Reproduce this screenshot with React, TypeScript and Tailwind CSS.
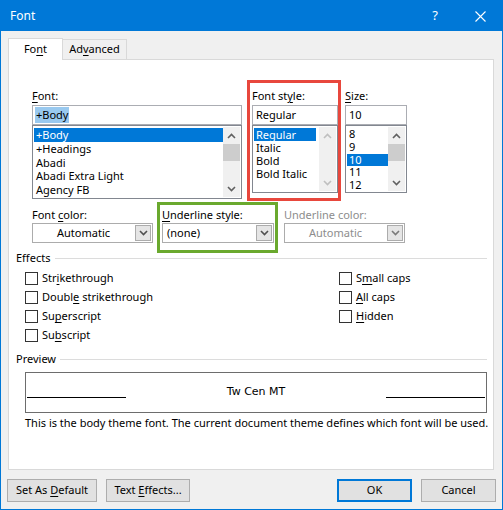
import React from "react";

const ui = { fontFamily: '"Noto Sans", "Open Sans", Arial, sans-serif' };

// label with an underlined access key
function Key({ text, k, className = "" }: { text: string; k?: number; className?: string }) {
  if (k === undefined) return <span className={className}>{text}</span>;
  return (
    <span className={className}>
      {text.slice(0, k)}
      <span className="underline underline-offset-2">{text[k]}</span>
      {text.slice(k + 1)}
    </span>
  );
}

function Chevron({ up = false, color = "#606060" }: { up?: boolean; color?: string }) {
  return (
    <svg width="9" height="6" viewBox="0 0 9 6">
      <polyline
        points={up ? "1,5 4.5,1.5 8,5" : "1,1 4.5,4.5 8,1"}
        fill="none"
        stroke={color}
        strokeWidth="1.6"
      />
    </svg>
  );
}

function Scrollbar({ thumb = true, disabled = false }: { thumb?: boolean; disabled?: boolean }) {
  const c = disabled ? "#bfbfbf" : "#606060";
  return (
    <div className="flex w-[17px] shrink-0 flex-col bg-[#f0f0f0]">
      <div className="flex h-[17px] items-center justify-center">
        <Chevron up color={c} />
      </div>
      <div className="flex-1">{thumb && <div className="h-[17px] bg-[#cdcdcd]" />}</div>
      <div className="flex h-[17px] items-center justify-center">
        <Chevron color={c} />
      </div>
    </div>
  );
}

function ListBox({
  items,
  selected,
  rowH,
  height,
  disabledBar = false,
}: {
  items: string[];
  selected: number;
  rowH: string;
  height: string;
  disabledBar?: boolean;
}) {
  return (
    <div className={`flex ${height} border border-[#828790] bg-white p-px`}>
      <div className="flex-1 overflow-hidden pt-px">
        {items.map((it, i) => (
          <div
            key={it}
            className={`${rowH} pl-[2px] ${
              i === selected ? "bg-[#0078d7] text-white" : "text-black"
            }`}
          >
            {it}
          </div>
        ))}
      </div>
      <Scrollbar disabled={disabledBar} thumb={!disabledBar} />
    </div>
  );
}

function TextBox({ value, highlight = false }: { value: string; highlight?: boolean }) {
  return (
    <div className="flex h-[20px] items-center border border-[#abadb3] bg-white px-[2px]">
      <span className={highlight ? "bg-[#99c9ef] px-px" : "px-px"}>{value}</span>
    </div>
  );
}

function Dropdown({
  value,
  center = true,
  disabled = false,
}: {
  value: string;
  center?: boolean;
  disabled?: boolean;
}) {
  return (
    <div className="flex h-[20px] border border-[#acacac] bg-white">
      <div
        className={`flex flex-1 items-center ${center ? "justify-center" : "pl-[4px]"} ${
          disabled ? "text-[#8d8d8d]" : "text-black"
        }`}
      >
        {value}
      </div>
      <div className="m-px flex w-[16px] items-center justify-center border border-[#acacac] bg-[#e5e5e5]">
        <Chevron color={disabled ? "#7a7a7a" : "#505050"} />
      </div>
    </div>
  );
}

function Check({ label, k }: { label: string; k: number }) {
  return (
    <div className="flex h-[19px] items-center gap-[4px]">
      <div className="h-[13px] w-[13px] border border-[#333333] bg-white" />
      <Key text={label} k={k} />
    </div>
  );
}

function GroupTitle({ title, line }: { title: string; line: string }) {
  return (
    <div className="flex h-[16px] items-center">
      <span>{title}</span>
      <div className={`ml-auto h-px ${line} bg-[#dcdcdc]`} />
    </div>
  );
}

function Button({ label, k, w, primary = false }: { label: string; k?: number; w: string; primary?: boolean }) {
  return (
    <div
      className={`flex h-[23px] ${w} items-center justify-center bg-[#e1e1e1] ${
        primary ? "border-2 border-[#0078d7]" : "border border-[#adadad]"
      }`}
    >
      <Key text={label} k={k} />
    </div>
  );
}

export default function App() {
  return (
    <div
      style={ui}
      className="flex h-[510px] w-[503px] flex-col border border-[#0078d7] bg-[#f0f0f0] text-[11px] text-black"
    >
      {/* title bar */}
      <div className="flex h-[30px] items-center bg-[#0078d7] pl-[9px] text-white">
        <span className="text-[12px]">Font</span>
        <span className="ml-auto mr-[37px] text-[13px]">?</span>
        <svg width="11" height="11" viewBox="0 0 11 11" className="mr-[16px]">
          <path d="M0.5 0.5 L10.5 10.5 M10.5 0.5 L0.5 10.5" stroke="white" strokeWidth="1.1" />
        </svg>
      </div>

      {/* tabs */}
      <div className="ml-[7px] mt-[7px] flex items-end">
        <div className="relative z-10 -mb-px flex h-[22px] w-[55px] items-center justify-center border border-b-0 border-[#d9d9d9] bg-white">
          <Key text="Font" k={2} />
        </div>
        <div className="flex h-[20px] w-[64px] items-center justify-center border border-b-0 border-l-0 border-[#d9d9d9] bg-[#f0f0f0]">
          <Key text="Advanced" k={2} />
        </div>
      </div>

      {/* panel */}
      <div className="ml-[7px] flex h-[411px] w-[486px] flex-col border border-[#d9d9d9] bg-white">
        {/* font / style / size */}
        <div className="ml-[23px] mt-[20px] flex items-start">
          <div className="mt-[8px] flex w-[210px] flex-col">
            <Key text="Font:" k={0} className="h-[16px] leading-[16px]" />
            <div className="mt-px">
              <TextBox value="+Body" highlight />
            </div>
            <ListBox
              items={["+Body", "+Headings", "Abadi", "Abadi Extra Light", "Agency FB"]}
              selected={0}
              rowH="h-[13.8px] leading-[13.8px]"
              height="h-[74px]"
            />
          </div>
          <div className="ml-[5px] flex h-[121px] w-[94px] flex-col border-[3px] border-[#e8473d] pb-[5px] pl-[2px] pt-[5px]">
            <Key text="Font style:" k={7} className="h-[16px] leading-[16px]" />
            <div className="mt-px">
              <TextBox value="Regular" />
            </div>
            <ListBox
              items={["Regular", "Italic", "Bold", "Bold Italic"]}
              selected={0}
              rowH="h-[13px] leading-[13px] w-[62px]"
              height="h-[68px]"
              disabledBar
            />
          </div>
          <div className="ml-[4px] mt-[8px] flex w-[62px] flex-col">
            <Key text="Size:" k={0} className="h-[16px] leading-[16px]" />
            <div className="mt-px">
              <TextBox value="10" />
            </div>
            <ListBox
              items={["8", "9", "10", "11", "12"]}
              selected={2}
              rowH="h-[12.8px] leading-[12.8px]"
              height="h-[68px]"
            />
          </div>
        </div>

        {/* colour / underline row */}
        <div className="ml-[23px] mt-px flex items-start">
          <div className="mt-[5px] flex w-[121px] flex-col">
            <Key text="Font color:" k={5} className="h-[16px] leading-[16px]" />
            <Dropdown value="Automatic" />
          </div>
          <div className="ml-[4px] flex h-[51px] w-[121px] flex-col border-[3px] border-[#6aa92e] pl-[2px] pr-px pt-[2px]">
            <Key text="Underline style:" k={0} className="h-[16px] leading-[16px]" />
            <Dropdown value="(none)" center={false} />
          </div>
          <div className="ml-[6px] mt-[5px] flex w-[121px] flex-col text-[#8d8d8d]">
            <span className="h-[16px] leading-[16px]">Underline color:</span>
            <Dropdown value="Automatic" disabled />
          </div>
        </div>

        {/* effects */}
        <div className="ml-[7px] mr-[6px] mt-[-3px]">
          <GroupTitle title="Effects" line="w-[432px]" />
        </div>
        <div className="ml-[16px] mt-[3px] flex">
          <div className="flex w-[314px] flex-col">
            <Check label="Strikethrough" k={3} />
            <Check label="Double strikethrough" k={5} />
            <Check label="Superscript" k={2} />
            <Check label="Subscript" k={2} />
          </div>
          <div className="flex flex-col">
            <Check label="Small caps" k={1} />
            <Check label="All caps" k={0} />
            <Check label="Hidden" k={0} />
          </div>
        </div>

        {/* preview */}
        <div className="ml-[7px] mr-[6px] mt-[6px]">
          <GroupTitle title="Preview" line="w-[427px]" />
        </div>
        <div className="ml-[16px] mr-[6px] mt-[5px] flex h-[41px] items-center border border-[#6d6d6d] px-px">
          <div className="mt-[9px] h-px w-[99px] bg-black" />
          <span className="flex-1 text-center" style={{ fontFamily: '"DejaVu Sans", sans-serif', fontSize: 11 }}>
            Tw Cen MT
          </span>
          <div className="mt-[9px] h-px w-[99px] bg-black" />
        </div>
        <div className="ml-[16px] mt-[2px] whitespace-nowrap leading-[16px]">
          This is the body theme font. The current document theme defines which font will be used.
        </div>
      </div>

      {/* buttons */}
      <div className="ml-[6px] mt-[9px] flex">
        <Button label="Set As Default" k={7} w="w-[90px]" />
        <div className="ml-[9px]">
          <Button label="Text Effects..." k={5} w="w-[84px]" />
        </div>
        <div className="ml-auto flex gap-[9px] pr-[6px]">
          <Button label="OK" w="w-[75px]" primary />
          <Button label="Cancel" w="w-[75px]" />
        </div>
      </div>
    </div>
  );
}
